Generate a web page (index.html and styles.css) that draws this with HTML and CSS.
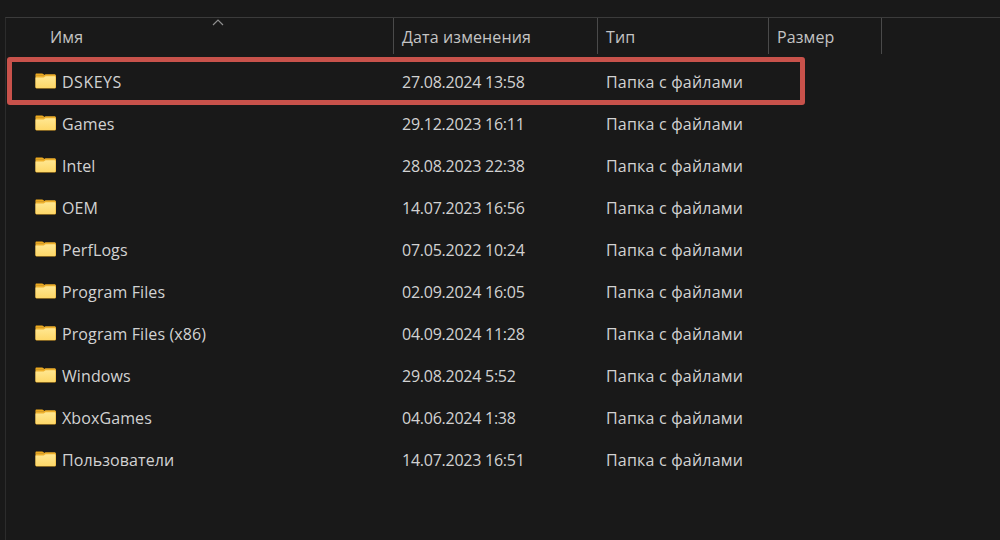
FILE: index.html
```html
<!DOCTYPE html>
<html lang="ru">
<head>
  <meta charset="UTF-8" />
  <title>Проводник</title>
  <link rel="stylesheet" href="styles.css">
</head>
<body>
  <svg class="defs" width="0" height="0">
    <defs>
      <linearGradient id="folderFill" x1="0" y1="0" x2="0" y2="1">
        <stop offset="0" stop-color="#ffe792"/>
        <stop offset="1" stop-color="#fdd768"/>
      </linearGradient>
      <symbol id="folder" viewBox="0 0 21 16">
        <path d="M1.5 0.5h5.6c.5 0 .9.2 1.2.5l1.7 1.6h-9.5V1.5c0-.6.4-1 1-1z" fill="#eda91f"/>
        <path d="M0.5 2.2h8.4l1.6-.9h8.8c1 0 1.7.7 1.7 1.6v11c0 .9-.7 1.6-1.7 1.6H2.2c-1 0-1.7-.7-1.7-1.6z" fill="#eeb02c"/>
        <path d="M0.5 4.4h8.2l1.8-1.2h8.8c.7 0 1.2.5 1.2 1.1v9.6c0 .7-.5 1.1-1.2 1.1H1.7c-.7 0-1.2-.4-1.2-1.1z" fill="url(#folderFill)"/>
      </symbol>
    </defs>
  </svg>

  <div class="explorer">
    <div class="columns header">
      <div class="col-head col-name">
        Имя
        <svg class="sort-arrow" width="12" height="7" viewBox="0 0 12 7"><path d="M1 6l5-5 5 5" fill="none" stroke="#8f8f8f" stroke-width="1.2"/></svg>
      </div>
      <div class="col-head">Дата изменения</div>
      <div class="col-head">Тип</div>
      <div class="col-head">Размер</div>
    </div>

    <div class="rows">
      <div class="columns row highlighted">
        <div class="cell-name"><svg class="folder"><use href="#folder"/></svg><span class="name wide">DSKEYS</span></div>
        <div class="cell date">27.08.2024 13:58</div>
        <div class="cell type">Папка с файлами</div>
        <div class="cell"></div>
      </div>
      <div class="columns row">
        <div class="cell-name"><svg class="folder"><use href="#folder"/></svg><span class="name">Games</span></div>
        <div class="cell date">29.12.2023 16:11</div>
        <div class="cell type">Папка с файлами</div>
        <div class="cell"></div>
      </div>
      <div class="columns row">
        <div class="cell-name"><svg class="folder"><use href="#folder"/></svg><span class="name">Intel</span></div>
        <div class="cell date">28.08.2023 22:38</div>
        <div class="cell type">Папка с файлами</div>
        <div class="cell"></div>
      </div>
      <div class="columns row">
        <div class="cell-name"><svg class="folder"><use href="#folder"/></svg><span class="name">OEM</span></div>
        <div class="cell date">14.07.2023 16:56</div>
        <div class="cell type">Папка с файлами</div>
        <div class="cell"></div>
      </div>
      <div class="columns row">
        <div class="cell-name"><svg class="folder"><use href="#folder"/></svg><span class="name">PerfLogs</span></div>
        <div class="cell date">07.05.2022 10:24</div>
        <div class="cell type">Папка с файлами</div>
        <div class="cell"></div>
      </div>
      <div class="columns row">
        <div class="cell-name"><svg class="folder"><use href="#folder"/></svg><span class="name">Program Files</span></div>
        <div class="cell date">02.09.2024 16:05</div>
        <div class="cell type">Папка с файлами</div>
        <div class="cell"></div>
      </div>
      <div class="columns row">
        <div class="cell-name"><svg class="folder"><use href="#folder"/></svg><span class="name">Program Files (x86)</span></div>
        <div class="cell date">04.09.2024 11:28</div>
        <div class="cell type">Папка с файлами</div>
        <div class="cell"></div>
      </div>
      <div class="columns row">
        <div class="cell-name"><svg class="folder"><use href="#folder"/></svg><span class="name">Windows</span></div>
        <div class="cell date">29.08.2024 5:52</div>
        <div class="cell type">Папка с файлами</div>
        <div class="cell"></div>
      </div>
      <div class="columns row">
        <div class="cell-name"><svg class="folder"><use href="#folder"/></svg><span class="name">XboxGames</span></div>
        <div class="cell date">04.06.2024 1:38</div>
        <div class="cell type">Папка с файлами</div>
        <div class="cell"></div>
      </div>
      <div class="columns row">
        <div class="cell-name"><svg class="folder"><use href="#folder"/></svg><span class="name">Пользователи</span></div>
        <div class="cell date">14.07.2023 16:51</div>
        <div class="cell type">Папка с файлами</div>
        <div class="cell"></div>
      </div>
    </div>
  </div>
</body>
</html>
```

FILE: styles.css
```css
html, body {
  height: 100%;
}

body {
  margin: 0;
  background-color: #191919;
  color: #d2d2d2;
  font-family: 'Open Sans', 'Noto Sans', sans-serif;
  font-size: 16px;
  overflow: hidden;
}

.defs {
  position: absolute;
}

.explorer {
  margin: 17px 0 0 5px;
  height: 523px;
  box-sizing: border-box;
  border-top: 1px solid #3b3b3b;
  border-left: 1px solid #2c2c2c;
}

.columns {
  display: grid;
  grid-template-columns: 388px 204px 171px 113px;
}

.header {
  height: 36px;
}

.col-head {
  position: relative;
  display: flex;
  align-items: center;
  padding: 2px 0 0 8px;
  border-right: 1px solid #4a4a4a;
  color: #c4c4c4;
  letter-spacing: 0.12px;
}

.col-name {
  padding-left: 44px;
}

.sort-arrow {
  position: absolute;
  left: 206px;
  top: 1px;
}

.rows {
  margin-top: 7px;
}

.row {
  position: relative;
  height: 42px;
  align-items: center;
}

.highlighted::after {
  content: "";
  position: absolute;
  left: 1px;
  top: -4px;
  width: 798px;
  height: 48px;
  box-sizing: border-box;
  border: 5px solid #c8524b;
  border-radius: 3px;
}

.cell-name {
  display: flex;
  align-items: center;
  gap: 6px;
  padding-left: 29px;
}

.name {
  letter-spacing: 0.1px;
}

.wide {
  letter-spacing: 0.5px;
}

.cell {
  padding-left: 8px;
}

.date {
  letter-spacing: -0.25px;
}

.type {
  letter-spacing: 0.2px;
}

.folder {
  width: 21px;
  height: 16px;
  margin-top: -2px;
}
```
